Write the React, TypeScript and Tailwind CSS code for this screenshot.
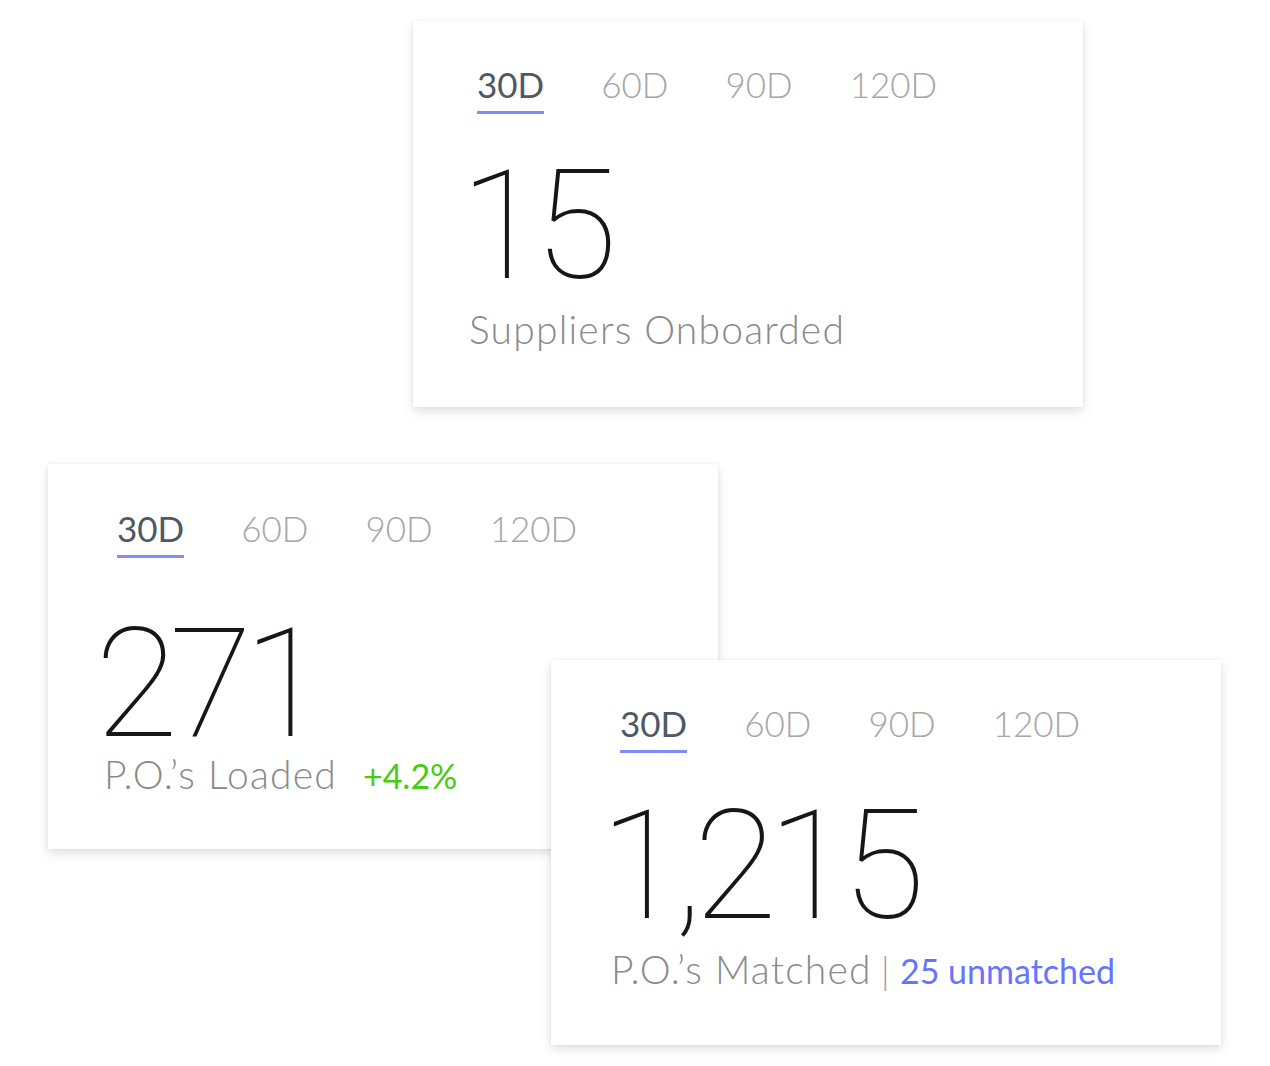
const tabs = ["30D", "60D", "90D", "120D"];

type CardProps = {
  className: string;
  tabsClass: string;
  value: string;
  valueClass: string;
  labelClass: string;
  children: React.ReactNode;
};

function StatCard({ className, tabsClass, value, valueClass, labelClass, children }: CardProps) {
  return (
    <div className={`absolute w-[670px] h-[385px] bg-white shadow-[0_4px_10px_rgba(0,0,0,0.13),0_0_3px_rgba(0,0,0,0.05)] pl-[55px] pt-[46px] ${className}`}>
      {/* period tabs */}
      <div className={`flex font-['Lato',sans-serif] font-light text-[35px] leading-none ${tabsClass}`}>
        {tabs.map((t, i) => (
          <div
            key={t}
            className={
              i === 0
                ? "pb-[9px] border-b-[3px] border-[#7f8cff] text-[#4f5965] font-normal"
                : "pb-[12px] text-[#a6a6a6]"
            }
          >
            {t}
          </div>
        ))}
      </div>
      <div className={`font-['Roboto',sans-serif] font-thin text-[152px] leading-none tracking-[-9px] text-[#161616] ${valueClass}`}>
        {value}
      </div>
      <div className={`flex items-baseline font-['Lato',sans-serif] font-light text-[39px] leading-none tracking-[1.2px] text-[#8a8a8a] whitespace-nowrap ${labelClass}`}>
        {children}
      </div>
    </div>
  );
}

export default function App() {
  return (
    <div className="relative w-[1270px] h-[1066px] bg-white overflow-hidden">
      <StatCard
        className="left-[413px] top-[21px] h-[386px]"
        tabsClass="ml-[9px] gap-[57px]"
        value="15"
        valueClass="mt-[36px] -ml-[8px]"
        labelClass="mt-[8px] ml-[1px]"
      >
        Suppliers Onboarded
      </StatCard>

      <StatCard
        className="left-[48px] top-[464px] pt-[47px]"
        tabsClass="ml-[14px] gap-[57px]"
        value="271"
        valueClass="mt-[50px] -ml-[8px]"
        labelClass="-mt-[5px] ml-[1px]"
      >
        <span>P.O.’s Loaded</span>
        <span className="ml-[26px] text-[34px] font-normal tracking-normal text-[#45cc10]">+4.2%</span>
      </StatCard>

      <StatCard
        className="left-[551px] top-[660px] h-[384px]"
        tabsClass="ml-[14px] gap-[57px]"
        value="1,215"
        valueClass="mt-[37px] -ml-[6px]"
        labelClass="mt-[8px] ml-[5px]"
      >
        <span>P.O.’s Matched</span>
        <span className="mx-[9px] text-[38px] font-light text-[#a0a0a0]">|</span>
        <span className="text-[34px] font-normal tracking-normal text-[#6474ff]">25 unmatched</span>
      </StatCard>
    </div>
  );
}
